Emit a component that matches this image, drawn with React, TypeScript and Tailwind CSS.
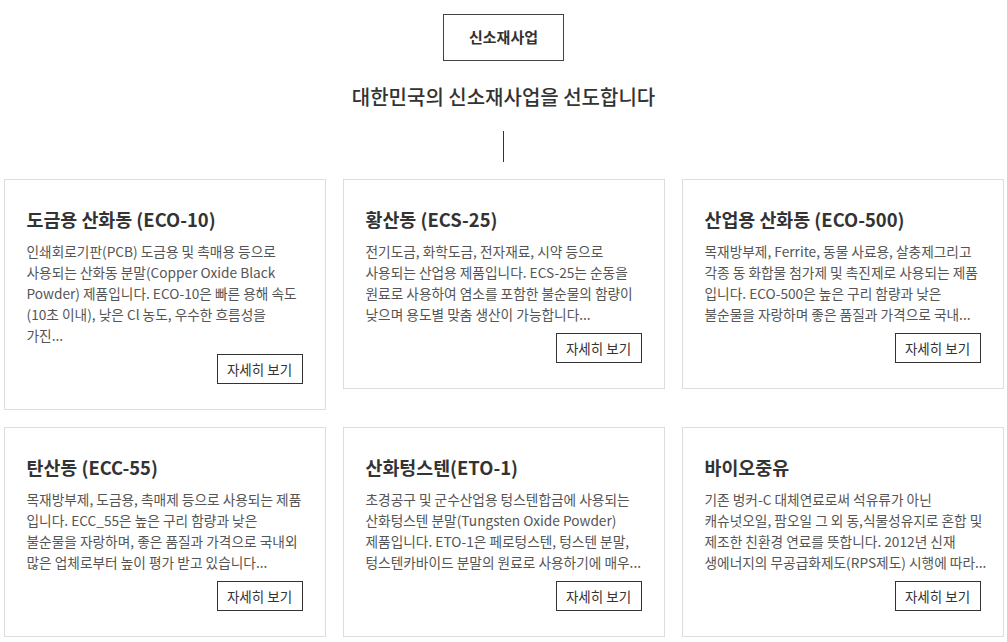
import React from "react";

type Item = { title: string; lines: string[] };

const row1: Item[] = [
  {
    title: "도금용 산화동 (ECO-10)",
    lines: [
      "인쇄회로기판(PCB) 도금용 및 촉매용 등으로",
      "사용되는 산화동 분말(Copper Oxide Black",
      "Powder) 제품입니다. ECO-10은 빠른 용해 속도",
      "(10초 이내), 낮은 Cl 농도, 우수한 흐름성을",
      "가진...",
    ],
  },
  {
    title: "황산동 (ECS-25)",
    lines: [
      "전기도금, 화학도금, 전자재료, 시약 등으로",
      "사용되는 산업용 제품입니다. ECS-25는 순동을",
      "원료로 사용하여 염소를 포함한 불순물의 함량이",
      "낮으며 용도별 맞춤 생산이 가능합니다...",
    ],
  },
  {
    title: "산업용 산화동 (ECO-500)",
    lines: [
      "목재방부제, Ferrite, 동물 사료용, 살충제그리고",
      "각종 동 화합물 첨가제 및 촉진제로 사용되는 제품",
      "입니다. ECO-500은 높은 구리 함량과 낮은",
      "불순물을 자랑하며 좋은 품질과 가격으로 국내...",
    ],
  },
];

const row2: Item[] = [
  {
    title: "탄산동 (ECC-55)",
    lines: [
      "목재방부제, 도금용, 촉매제 등으로 사용되는 제품",
      "입니다. ECC_55은 높은 구리 함량과 낮은",
      "불순물을 자랑하며, 좋은 품질과 가격으로 국내외",
      "많은 업체로부터 높이 평가 받고 있습니다...",
    ],
  },
  {
    title: "산화텅스텐(ETO-1)",
    lines: [
      "초경공구 및 군수산업용 텅스텐합금에 사용되는",
      "산화텅스텐 분말(Tungsten Oxide Powder)",
      "제품입니다. ETO-1은 페로텅스텐, 텅스텐 분말,",
      "텅스텐카바이드 분말의 원료로 사용하기에 매우...",
    ],
  },
  {
    title: "바이오중유",
    lines: [
      "기존 벙커-C 대체연료로써 석유류가 아닌",
      "캐슈넛오일, 팜오일 그 외 동,식물성유지로 혼합 및",
      "제조한 친환경 연료를 뜻합니다. 2012년 신재",
      "생에너지의 무공급화제도(RPS제도) 시행에 따라...",
    ],
  },
];

function Card({ item }: { item: Item }) {
  return (
    <div className="flex flex-col border border-[#dddddd] bg-white pt-[26px] pb-[25px] px-[22px]">
      <h3 className="text-[18.4px] font-bold leading-[27px] text-[#333333]">{item.title}</h3>
      <div className="mt-[8px] text-[13.7px] leading-[21px] text-[#555555]">
        {item.lines.map((l, i) => (
          <div key={i} className="whitespace-nowrap">
            {l}
          </div>
        ))}
      </div>
      <button className="mt-[8px] self-end h-[30px] w-[86px] border border-[#333333] bg-white text-[13.5px] text-[#333333]">
        자세히 보기
      </button>
    </div>
  );
}

export default function App() {
  return (
    <div
      className="min-h-[642px] w-full bg-white"
      style={{ fontFamily: '"Noto Sans CJK KR", "Noto Sans", sans-serif' }}
    >
      <div className="flex flex-col items-center pt-[14px]">
        <div className="flex h-[47px] w-[121px] items-center justify-center border border-[#444444] text-[15px] font-bold text-[#333333]">
          신소재사업
        </div>
        <h2 className="mt-[22px] text-[20px] font-medium leading-[28px] text-[#333333]">
          대한민국의 신소재사업을 선도합니다
        </h2>
        <div className="mt-[20px] h-[31px] w-px bg-[#333333]" />
      </div>
      <div className="mx-auto mt-[17px] w-[1000px]">
        <div className="grid grid-cols-3 items-start gap-x-[17px]">
          {row1.map((it) => (
            <Card key={it.title} item={it} />
          ))}
        </div>
        <div className="mt-[17px] grid grid-cols-3 items-start gap-x-[17px]">
          {row2.map((it) => (
            <Card key={it.title} item={it} />
          ))}
        </div>
      </div>
    </div>
  );
}
